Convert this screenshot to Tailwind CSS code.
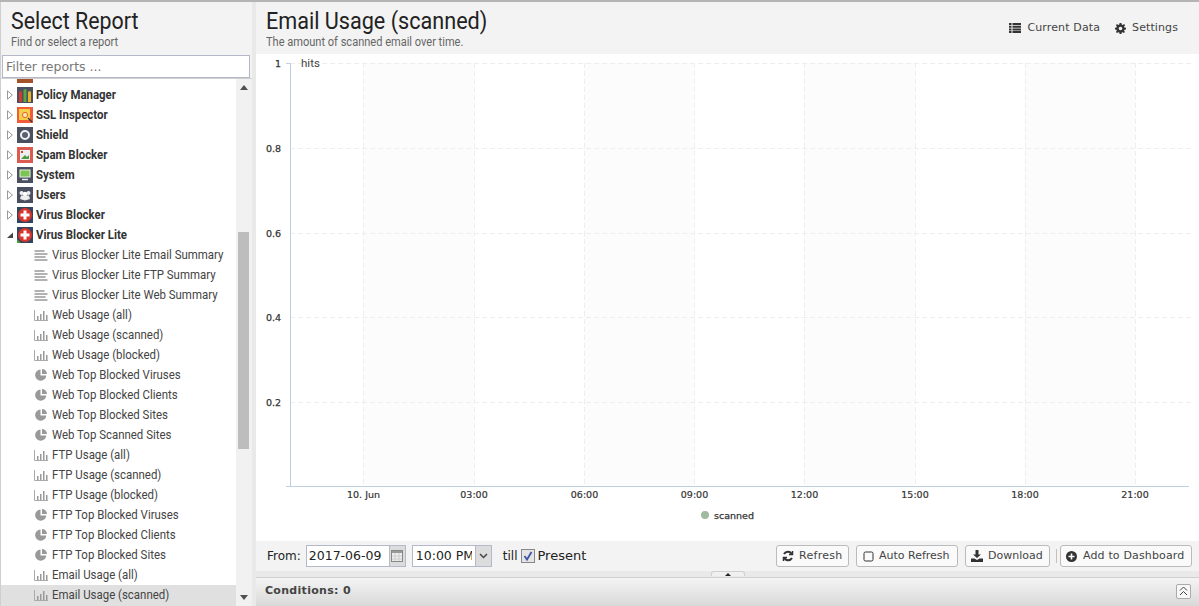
<!DOCTYPE html>
<html lang="en">
<head>
    <meta charset="UTF-8">
    <title>Reports</title>
    <script src="https://cdn.jsdelivr.net/npm/@tailwindcss/browser@4"></script>
</head>
<body class="w-[1199px] h-[606px] overflow-hidden bg-white font-['DejaVu_Sans',sans-serif] text-[11px] text-[#333]">

<!-- shared icons -->
<svg class="hidden">
    <symbol id="tri" viewBox="0 0 6 10"><path d="M.5.8 5.400 5 .5 9.200Z" fill="#fff" stroke="#999"/></symbol>
    <symbol id="lines" viewBox="0 0 13 11"><path d="M0 1h10M0 4h13M0 7h11M0 10h13" stroke="#999" stroke-width="1.400"/></symbol>
    <symbol id="bars" viewBox="0 0 14 11"><path d="M.5 0v10.500H14" fill="none" stroke="#aaa"/><path d="M3 6h1.500v4H3ZM6 4h1.500v6H6ZM9 1h1.500v9H9ZM12 5h1.500v5H12Z" fill="#999"/></symbol>
    <symbol id="pie" viewBox="0 0 12 12"><path d="M5.500.6v6h5.800A5.600 5.600 0 1 1 5.500.6Z" fill="#999"/><path d="M7 0a5 5 0 0 1 5 5H7Z" fill="#999"/></symbol>
    <symbol id="virus" viewBox="0 0 16 16"><rect width="16" height="16" fill="#2f4560"/><circle cx="8" cy="8" r="7" fill="#d9352c"/><path d="M6.500 3.500h3v3h3v3h-3v3h-3v-3h-3v-3h3Z" fill="#fff"/></symbol>
</svg>

<div class="flex flex-col h-full border-t-2 border-[#b4b4b4]">
    <div class="flex flex-1 min-h-0">

        <!-- report picker -->
        <div class="w-[252px] flex flex-col border-l border-[#cfcfcf] shrink-0">
            <div class="h-[53px] bg-[#f3f3f3] pl-[10px] pt-[5px] font-['Roboto',sans-serif]">
                <div class="text-[24px] leading-[28px] text-[#222] scale-x-[.89] origin-left whitespace-nowrap">Select Report</div>
                <div class="text-[12px] leading-[14px] text-[#666] scale-x-[.92] origin-left whitespace-nowrap">Find or select a report</div>
            </div>
            <div class="bg-[#f3f3f3] border-b border-[#cfcfcf] h-[24px] pl-[1px]">
                <input type="text" placeholder="Filter reports ..." class="block w-[248px] h-[23px] px-[3px] bg-white border border-[#b5b8c8] font-['DejaVu_Sans',sans-serif] text-[12.500px] placeholder:text-[#777] outline-none">
            </div>
            <div class="flex flex-1 min-h-0">
                <div class="w-[235px] overflow-hidden font-['Roboto',sans-serif] text-[13px] leading-[20px]">
                    <div class="-mt-[14px]">
                        <div class="h-[20px] flex items-center pl-[16px]"><svg width="16" height="16"><rect width="16" height="16" fill="#a5512a"/></svg></div>

                        <div class="h-[20px] flex items-center pl-[6px] font-bold text-[#333]"><svg class="w-[6px] h-[10px] mr-[4px] shrink-0"><use href="#tri"/></svg><svg class="mr-[3px] shrink-0" width="16" height="16" viewBox="0 0 16 16"><rect width="16" height="16" fill="#4a5060"/><path d="M2 6h3v9H2Z" fill="#d43a2f"/><path d="M6.500 4h3v11h-3Z" fill="#5ca53f"/><path d="M11 6h3v9h-3Z" fill="#e5b428"/><circle cx="3.500" cy="5.500" r="1.500" fill="#d43a2f"/><circle cx="8" cy="3.500" r="1.500" fill="#5ca53f"/><circle cx="12.500" cy="5.500" r="1.500" fill="#e5b428"/></svg><span class="scale-x-[.88] origin-left whitespace-nowrap">Policy Manager</span></div>
                        <div class="h-[20px] flex items-center pl-[6px] font-bold text-[#333]"><svg class="w-[6px] h-[10px] mr-[4px] shrink-0"><use href="#tri"/></svg><svg class="mr-[3px] shrink-0" width="16" height="16" viewBox="0 0 16 16"><rect width="16" height="16" fill="#f05c38"/><rect x="2" y="2" width="11" height="11" fill="#f6cf4a"/><circle cx="8" cy="8" r="2.600" fill="#f9e9b0" stroke="#e8602e"/><path d="m11 11 4 4" stroke="#333" stroke-width="1.300"/></svg><span class="scale-x-[.88] origin-left whitespace-nowrap">SSL Inspector</span></div>
                        <div class="h-[20px] flex items-center pl-[6px] font-bold text-[#333]"><svg class="w-[6px] h-[10px] mr-[4px] shrink-0"><use href="#tri"/></svg><svg class="mr-[3px] shrink-0" width="16" height="16" viewBox="0 0 16 16"><rect width="16" height="16" fill="#4a5060"/><circle cx="8" cy="8" r="4" fill="#5a6070" stroke="#f0f1f3" stroke-width="2"/></svg><span class="scale-x-[.88] origin-left whitespace-nowrap">Shield</span></div>
                        <div class="h-[20px] flex items-center pl-[6px] font-bold text-[#333]"><svg class="w-[6px] h-[10px] mr-[4px] shrink-0"><use href="#tri"/></svg><svg class="mr-[3px] shrink-0" width="16" height="16" viewBox="0 0 16 16"><rect width="16" height="16" fill="#dd5a50"/><rect x="3" y="3" width="10" height="10" fill="#eee"/><path d="m4 12 4-4 2 2 2-2v4Z" fill="#4f9a3d"/><rect x="4" y="4" width="2" height="2" fill="#c8403a"/></svg><span class="scale-x-[.88] origin-left whitespace-nowrap">Spam Blocker</span></div>
                        <div class="h-[20px] flex items-center pl-[6px] font-bold text-[#333]"><svg class="w-[6px] h-[10px] mr-[4px] shrink-0"><use href="#tri"/></svg><svg class="mr-[3px] shrink-0" width="16" height="16" viewBox="0 0 16 16"><rect width="16" height="16" fill="#4a5060"/><rect x="3" y="3" width="10" height="7" fill="#7ac554" stroke="#e8f0e0"/><path d="M5 12.500h6" stroke="#e8e8e8" stroke-width="1.500"/></svg><span class="scale-x-[.88] origin-left whitespace-nowrap">System</span></div>
                        <div class="h-[20px] flex items-center pl-[6px] font-bold text-[#333]"><svg class="w-[6px] h-[10px] mr-[4px] shrink-0"><use href="#tri"/></svg><svg class="mr-[3px] shrink-0" width="16" height="16" viewBox="0 0 16 16"><rect width="16" height="16" fill="#4a5060"/><circle cx="4.500" cy="6" r="2" fill="#eee"/><circle cx="11.500" cy="6" r="2" fill="#eee"/><circle cx="8" cy="7" r="2.300" fill="#fff"/><path d="M3 12 4 8.500h8l1 3.500-5 1.500Z" fill="#eee"/></svg><span class="scale-x-[.88] origin-left whitespace-nowrap">Users</span></div>
                        <div class="h-[20px] flex items-center pl-[6px] font-bold text-[#333]"><svg class="w-[6px] h-[10px] mr-[4px] shrink-0"><use href="#tri"/></svg><svg class="mr-[3px] shrink-0" width="16" height="16"><use href="#virus"/></svg><span class="scale-x-[.88] origin-left whitespace-nowrap">Virus Blocker</span></div>
                        <div class="h-[20px] flex items-center pl-[6px] font-bold text-[#333]"><svg class="w-[6px] h-[10px] mr-[4px] shrink-0" viewBox="0 0 6 10"><path d="M0 8 6 2.500V8Z" fill="#444"/></svg><svg class="mr-[3px] shrink-0" width="16" height="16" viewBox="0 0 16 16"><use href="#virus"/><path d="m0 12 4 4H0Z" fill="#4f9a3d"/></svg><span class="scale-x-[.88] origin-left whitespace-nowrap">Virus Blocker Lite</span></div>

                        <div class="h-[20px] flex items-center pl-[33px] text-[#444]"><svg class="w-[14px] h-[11px] mr-[4px] shrink-0"><use href="#lines"/></svg><span class="scale-x-[.88] origin-left whitespace-nowrap">Virus Blocker Lite Email Summary</span></div>
                        <div class="h-[20px] flex items-center pl-[33px] text-[#444]"><svg class="w-[14px] h-[11px] mr-[4px] shrink-0"><use href="#lines"/></svg><span class="scale-x-[.88] origin-left whitespace-nowrap">Virus Blocker Lite FTP Summary</span></div>
                        <div class="h-[20px] flex items-center pl-[33px] text-[#444]"><svg class="w-[14px] h-[11px] mr-[4px] shrink-0"><use href="#lines"/></svg><span class="scale-x-[.88] origin-left whitespace-nowrap">Virus Blocker Lite Web Summary</span></div>
                        <div class="h-[20px] flex items-center pl-[33px] text-[#444]"><svg class="w-[14px] h-[11px] mr-[4px] shrink-0"><use href="#bars"/></svg><span class="scale-x-[.88] origin-left whitespace-nowrap">Web Usage (all)</span></div>
                        <div class="h-[20px] flex items-center pl-[33px] text-[#444]"><svg class="w-[14px] h-[11px] mr-[4px] shrink-0"><use href="#bars"/></svg><span class="scale-x-[.88] origin-left whitespace-nowrap">Web Usage (scanned)</span></div>
                        <div class="h-[20px] flex items-center pl-[33px] text-[#444]"><svg class="w-[14px] h-[11px] mr-[4px] shrink-0"><use href="#bars"/></svg><span class="scale-x-[.88] origin-left whitespace-nowrap">Web Usage (blocked)</span></div>
                        <div class="h-[20px] flex items-center pl-[34px] text-[#444]"><svg class="w-[12px] h-[12px] mr-[5px] shrink-0"><use href="#pie"/></svg><span class="scale-x-[.88] origin-left whitespace-nowrap">Web Top Blocked Viruses</span></div>
                        <div class="h-[20px] flex items-center pl-[34px] text-[#444]"><svg class="w-[12px] h-[12px] mr-[5px] shrink-0"><use href="#pie"/></svg><span class="scale-x-[.88] origin-left whitespace-nowrap">Web Top Blocked Clients</span></div>
                        <div class="h-[20px] flex items-center pl-[34px] text-[#444]"><svg class="w-[12px] h-[12px] mr-[5px] shrink-0"><use href="#pie"/></svg><span class="scale-x-[.88] origin-left whitespace-nowrap">Web Top Blocked Sites</span></div>
                        <div class="h-[20px] flex items-center pl-[34px] text-[#444]"><svg class="w-[12px] h-[12px] mr-[5px] shrink-0"><use href="#pie"/></svg><span class="scale-x-[.88] origin-left whitespace-nowrap">Web Top Scanned Sites</span></div>
                        <div class="h-[20px] flex items-center pl-[33px] text-[#444]"><svg class="w-[14px] h-[11px] mr-[4px] shrink-0"><use href="#bars"/></svg><span class="scale-x-[.88] origin-left whitespace-nowrap">FTP Usage (all)</span></div>
                        <div class="h-[20px] flex items-center pl-[33px] text-[#444]"><svg class="w-[14px] h-[11px] mr-[4px] shrink-0"><use href="#bars"/></svg><span class="scale-x-[.88] origin-left whitespace-nowrap">FTP Usage (scanned)</span></div>
                        <div class="h-[20px] flex items-center pl-[33px] text-[#444]"><svg class="w-[14px] h-[11px] mr-[4px] shrink-0"><use href="#bars"/></svg><span class="scale-x-[.88] origin-left whitespace-nowrap">FTP Usage (blocked)</span></div>
                        <div class="h-[20px] flex items-center pl-[34px] text-[#444]"><svg class="w-[12px] h-[12px] mr-[5px] shrink-0"><use href="#pie"/></svg><span class="scale-x-[.88] origin-left whitespace-nowrap">FTP Top Blocked Viruses</span></div>
                        <div class="h-[20px] flex items-center pl-[34px] text-[#444]"><svg class="w-[12px] h-[12px] mr-[5px] shrink-0"><use href="#pie"/></svg><span class="scale-x-[.88] origin-left whitespace-nowrap">FTP Top Blocked Clients</span></div>
                        <div class="h-[20px] flex items-center pl-[34px] text-[#444]"><svg class="w-[12px] h-[12px] mr-[5px] shrink-0"><use href="#pie"/></svg><span class="scale-x-[.88] origin-left whitespace-nowrap">FTP Top Blocked Sites</span></div>
                        <div class="h-[20px] flex items-center pl-[33px] text-[#444]"><svg class="w-[14px] h-[11px] mr-[4px] shrink-0"><use href="#bars"/></svg><span class="scale-x-[.88] origin-left whitespace-nowrap">Email Usage (all)</span></div>
                        <div class="h-[22px] pb-[2px] flex items-center pl-[33px] text-[#444] bg-[#e0e0e0]"><svg class="w-[14px] h-[11px] mr-[4px] shrink-0"><use href="#bars"/></svg><span class="scale-x-[.88] origin-left whitespace-nowrap">Email Usage (scanned)</span></div>
                    </div>
                </div>
                <!-- scrollbar -->
                <div class="w-[16px] bg-[#f1f1f1] flex flex-col items-center relative">
                    <svg class="mt-[6px] shrink-0" width="8" height="5"><path d="M4 0 8 5H0Z" fill="#505050"/></svg>
                    <div class="w-[11px] h-[217px] mt-[142px] mr-[1px] bg-[#bdbdbd]"></div>
                    <svg class="mt-auto mb-[6px] shrink-0" width="8" height="5"><path d="M4 5 8 0H0Z" fill="#505050"/></svg>
                </div>
            </div>
        </div>

        <div class="w-[4px] bg-[#e9e9e9] shrink-0"></div>

        <!-- report -->
        <div class="flex-1 flex flex-col min-w-0">
            <div class="h-[52px] bg-[#f3f3f3] flex justify-between pl-[10px] pr-[21px] pt-[5px] font-['Roboto',sans-serif]">
                <div>
                    <div class="text-[24px] leading-[28px] text-[#222] scale-x-[.9] origin-left whitespace-nowrap">Email Usage (scanned)</div>
                    <div class="text-[12px] leading-[14px] text-[#666] scale-x-[.92] origin-left whitespace-nowrap">The amount of scanned email over time.</div>
                </div>
                <div class="flex items-center gap-[15px] h-[42px] font-['DejaVu_Sans',sans-serif] text-[11px] text-[#444]">
                    <span class="flex items-center gap-[6px] tracking-[.13px]"><svg width="12" height="10" viewBox="0 0 12 10"><path d="M0 0h2.500v2H0ZM3.500 0H12v2H3.500ZM0 2.700h2.500v2H0ZM3.500 2.700H12v2H3.500ZM0 5.400h2.500v2H0ZM3.500 5.400H12v2H3.500ZM0 8h2.500v2H0ZM3.500 8H12v2H3.500Z" fill="#333"/></svg>Current Data</span>
                    <span class="flex items-center gap-[6px] tracking-[.1px]"><svg width="11" height="11" viewBox="0 0 12 12"><path fill-rule="evenodd" d="M5 0h2l.3 1.700 1.200.5L10 1.200 11 2.500 9.900 3.800l.4 1.200 1.700.3v1.700l-1.700.3-.4 1.200 1 1.400L9.500 11 8.500 10l-1.200.4L7 12H5l-.3-1.600L3.500 10l-1.300 1L1 9.900l1-1.400-.5-1.200L0 7V5.300l1.600-.3.400-1.200-1-1.300L2.200 1.200l1.300 1 1.200-.5ZM6 4a2 2 0 1 0 0 4 2 2 0 0 0 0-4Z" fill="#333"/></svg>Settings</span>
                </div>
            </div>

            <svg class="block shrink-0" width="943" height="487" viewBox="256 54 943 487">
                <g fill="#fcfcfc">
                    <rect x="363.500" y="63" width="110.500" height="423"/>
                    <rect x="584" y="63" width="110.500" height="423"/>
                    <rect x="804.500" y="63" width="110.500" height="423"/>
                    <rect x="1025" y="63" width="110.500" height="423"/>
                </g>
                <g stroke="#eeeeee" stroke-dasharray="5 3" fill="none">
                    <path d="M290 63.500H1194M290 148.500H1194M290 233.500H1194M290 317.500H1194M290 402.500H1194"/>
                    <path d="M363.500 63V486M474.500 63V486M584.500 63V486M694.500 63V486M804.500 63V486M915.500 63V486M1025.500 63V486M1135.500 63V486"/>
                </g>
                <path d="M290.500 63V486.500M286 486.500H1189M286 63.500h4" stroke="#c0d0e0" fill="none"/>
                <g font-family="DejaVu Sans" font-size="9.500" fill="#333" stroke="#333" stroke-width=".25" text-anchor="end">
                    <text x="281" y="67">1</text>
                    <text x="281" y="152">0.8</text>
                    <text x="281" y="237">0.6</text>
                    <text x="281" y="321">0.4</text>
                    <text x="281" y="406">0.2</text>
                </g>
                <text x="301" y="67" font-family="Roboto" font-size="11.500" fill="#444">hits</text>
                <g font-family="DejaVu Sans" font-size="9.500" fill="#333" stroke="#333" stroke-width=".2" text-anchor="middle">
                    <text x="363.500" y="498">10. Jun</text>
                    <text x="474" y="498">03:00</text>
                    <text x="584.500" y="498">06:00</text>
                    <text x="694.500" y="498">09:00</text>
                    <text x="804.500" y="498">12:00</text>
                    <text x="915" y="498">15:00</text>
                    <text x="1025" y="498">18:00</text>
                    <text x="1135" y="498">21:00</text>
                </g>
                <circle cx="705" cy="515" r="4" fill="#a0bb9f"/>
                <text x="714" y="518.500" font-family="DejaVu Sans" font-size="9.500" fill="#333" stroke="#333" stroke-width=".25">scanned</text>
            </svg>

            <!-- date toolbar -->
            <div class="h-[30px] bg-[#f3f3f3] flex items-center pl-[11px] pr-[7px] text-[12px] text-[#222] shrink-0">
                <span class="mr-[5px]">From:</span>
                <div class="flex h-[22px] w-[100px] border border-[#b5b8c8] bg-white">
                    <input type="text" value="2017-06-09" readonly class="w-[82px] px-[2px] text-[12.500px] outline-none font-['DejaVu_Sans',sans-serif]">
                    <div class="flex-1 bg-[#dcdcdc] flex items-center justify-center border-l border-[#b5b8c8]"><svg width="12" height="12" viewBox="0 0 12 12"><rect x=".5" y=".5" width="11" height="11" fill="#eee" stroke="#888"/><path d="M1 1h10v2H1Z" fill="#999"/><path d="M4 3v8M8 3v8M1 6h10M1 9h10" stroke="#ccc"/></svg></div>
                </div>
                <div class="flex h-[22px] w-[80px] ml-[6px] border border-[#b5b8c8] bg-white">
                    <input type="text" value="10:00 PM" readonly class="w-[62px] px-[3px] text-[12.500px] outline-none font-['DejaVu_Sans',sans-serif]">
                    <div class="flex-1 bg-[#dcdcdc] flex items-center justify-center border-l border-[#b5b8c8]"><svg width="9" height="6" viewBox="0 0 9 6"><path d="m1 1 3.500 3.500L8 1" fill="none" stroke="#444" stroke-width="1.500"/></svg></div>
                </div>
                <span class="ml-[11px]">till</span>
                <svg class="ml-[3px] mr-[3px] shrink-0" width="14" height="14" viewBox="0 0 14 14"><rect x=".5" y=".5" width="13" height="13" fill="#e4e4e4" stroke="#888"/><path d="m3.500 7 2.500 3.500L10.500 3" fill="none" stroke="#3e55a5" stroke-width="1.800"/></svg>
                <span class="text-[13px]">Present</span>

                <div class="ml-auto flex items-center text-[11px] text-[#444] whitespace-nowrap">
                    <span class="h-[22px] px-[5px] w-[73px] flex items-center gap-[5px] border border-[#bbb] rounded-[3px] bg-[#fafafa] tracking-[.3px]"><svg class="shrink-0" width="12" height="12" viewBox="0 0 12 12"><path d="M10.500 1v3.500H7M1.500 11V7.500H5" fill="none" stroke="#333" stroke-width="1.500"/><path d="M10 4.500A4.500 4.500 0 0 0 2 4M2 7.500A4.500 4.500 0 0 0 10 8" fill="none" stroke="#333" stroke-width="2"/></svg>Refresh</span>
                    <span class="h-[22px] ml-[7px] w-[102px] px-[6px] flex items-center gap-[5px] border border-[#bbb] rounded-[3px] bg-[#fafafa]"><svg class="shrink-0" width="11" height="11" viewBox="0 0 11 11"><rect x="1" y="1" width="9" height="9" rx="1.500" fill="none" stroke="#333"/></svg>Auto Refresh</span>
                    <span class="h-[22px] ml-[7px] w-[85px] px-[5px] flex items-center gap-[5px] border border-[#bbb] rounded-[3px] bg-[#fafafa]"><svg class="shrink-0" width="12" height="12" viewBox="0 0 12 12"><path d="M4.500 0h3v4.500H10L6 8 2 4.500h2.500Z" fill="#333"/><path d="M0 8.500h3.500L6 10l2.500-1.500H12V12H0Z" fill="#333"/></svg>Download</span>
                    <span class="w-px h-[14px] bg-[#c9c0b0] ml-[6px]"></span>
                    <span class="h-[22px] ml-[3px] w-[132px] px-[5px] flex items-center gap-[6px] border border-[#bbb] rounded-[3px] bg-[#fafafa] tracking-[.15px]"><svg class="shrink-0" width="11" height="11" viewBox="0 0 11 11"><circle cx="5.500" cy="5.500" r="5.500" fill="#333"/><path d="M5.500 2.500v6M2.500 5.500h6" stroke="#fff" stroke-width="1.600"/></svg>Add to Dashboard</span>
                </div>
            </div>

            <!-- conditions splitter -->
            <div class="h-[6px] bg-[#e9e9e9] flex justify-center shrink-0">
                <div class="w-[34px] h-[5px] bg-[#f0f0f0] border-t border-x border-[#d0d0d0] rounded-t-[3px] flex justify-center pt-[1px]"><svg class="block" width="6" height="3"><path d="M3 0 6 3H0Z" fill="#222"/></svg></div>
            </div>
            <div class="flex-1 flex items-center justify-between pl-[9px] pr-[8px] pb-[2px] border-t border-[#cfcfcf] bg-gradient-to-b from-[#f4f4f4] to-[#d9d9d9]">
                <span class="font-bold text-[11px] text-[#444] tracking-[.3px]">Conditions: 0</span>
                <span class="w-[15px] h-[15px] border border-[#aaa] rounded-[2px] bg-[#f7f7f7] flex items-center justify-center"><svg width="9" height="10" viewBox="0 0 9 10"><path d="m1 4.500 3.500-3.500L8 4.500M1 9l3.500-3.500L8 9" fill="none" stroke="#444"/></svg></span>
            </div>
        </div>
    </div>
</div>
</body>
</html>
